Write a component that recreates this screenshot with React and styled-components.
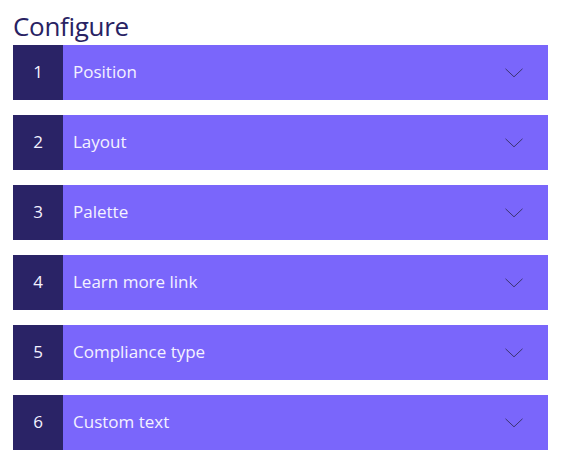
import styled, { createGlobalStyle } from "styled-components";

const Global = createGlobalStyle`
  body {
    margin: 0;
    background: #fff;
    font-family: "Open Sans", "Noto Sans", sans-serif;
  }
`;

const Page = styled.div`
  padding: 8px 14px 0 13px;
`;

const Heading = styled.h1`
  margin: 0;
  font-size: 26px;
  font-weight: 400;
  line-height: 37px;
  color: #282263;
  letter-spacing: -0.3px;
`;

const List = styled.div`
  display: flex;
  flex-direction: column;
  gap: 15px;
`;

const Row = styled.div`
  display: flex;
  height: 55px;
  background: #7a66fb;
  color: #f4f2ff;
  font-size: 17px;
  cursor: pointer;
`;

const Num = styled.div`
  width: 50px;
  flex: none;
  display: flex;
  align-items: center;
  justify-content: center;
  padding-bottom: 2px;
  box-sizing: border-box;
  background: #2a2366;
`;

const Label = styled.div`
  flex: 1;
  display: flex;
  align-items: center;
  padding: 0 0 2px 10px;
`;

const Chevron = styled.svg`
  align-self: center;
  margin-right: 25px;
`;

const items = [
  "Position",
  "Layout",
  "Palette",
  "Learn more link",
  "Compliance type",
  "Custom text",
];

export default function App() {
  return (
    <Page>
      <Global />
      <Heading>Configure</Heading>
      <List>
        {items.map((t, i) => (
          <Row key={t}>
            <Num>{i + 1}</Num>
            <Label>{t}</Label>
            <Chevron width="18" height="10" viewBox="0 0 18 10">
              <path d="M0.5 0.8 L9 8.8 L17.5 0.8" fill="none" stroke="#3b3570" strokeWidth="1" />
            </Chevron>
          </Row>
        ))}
      </List>
    </Page>
  );
}
